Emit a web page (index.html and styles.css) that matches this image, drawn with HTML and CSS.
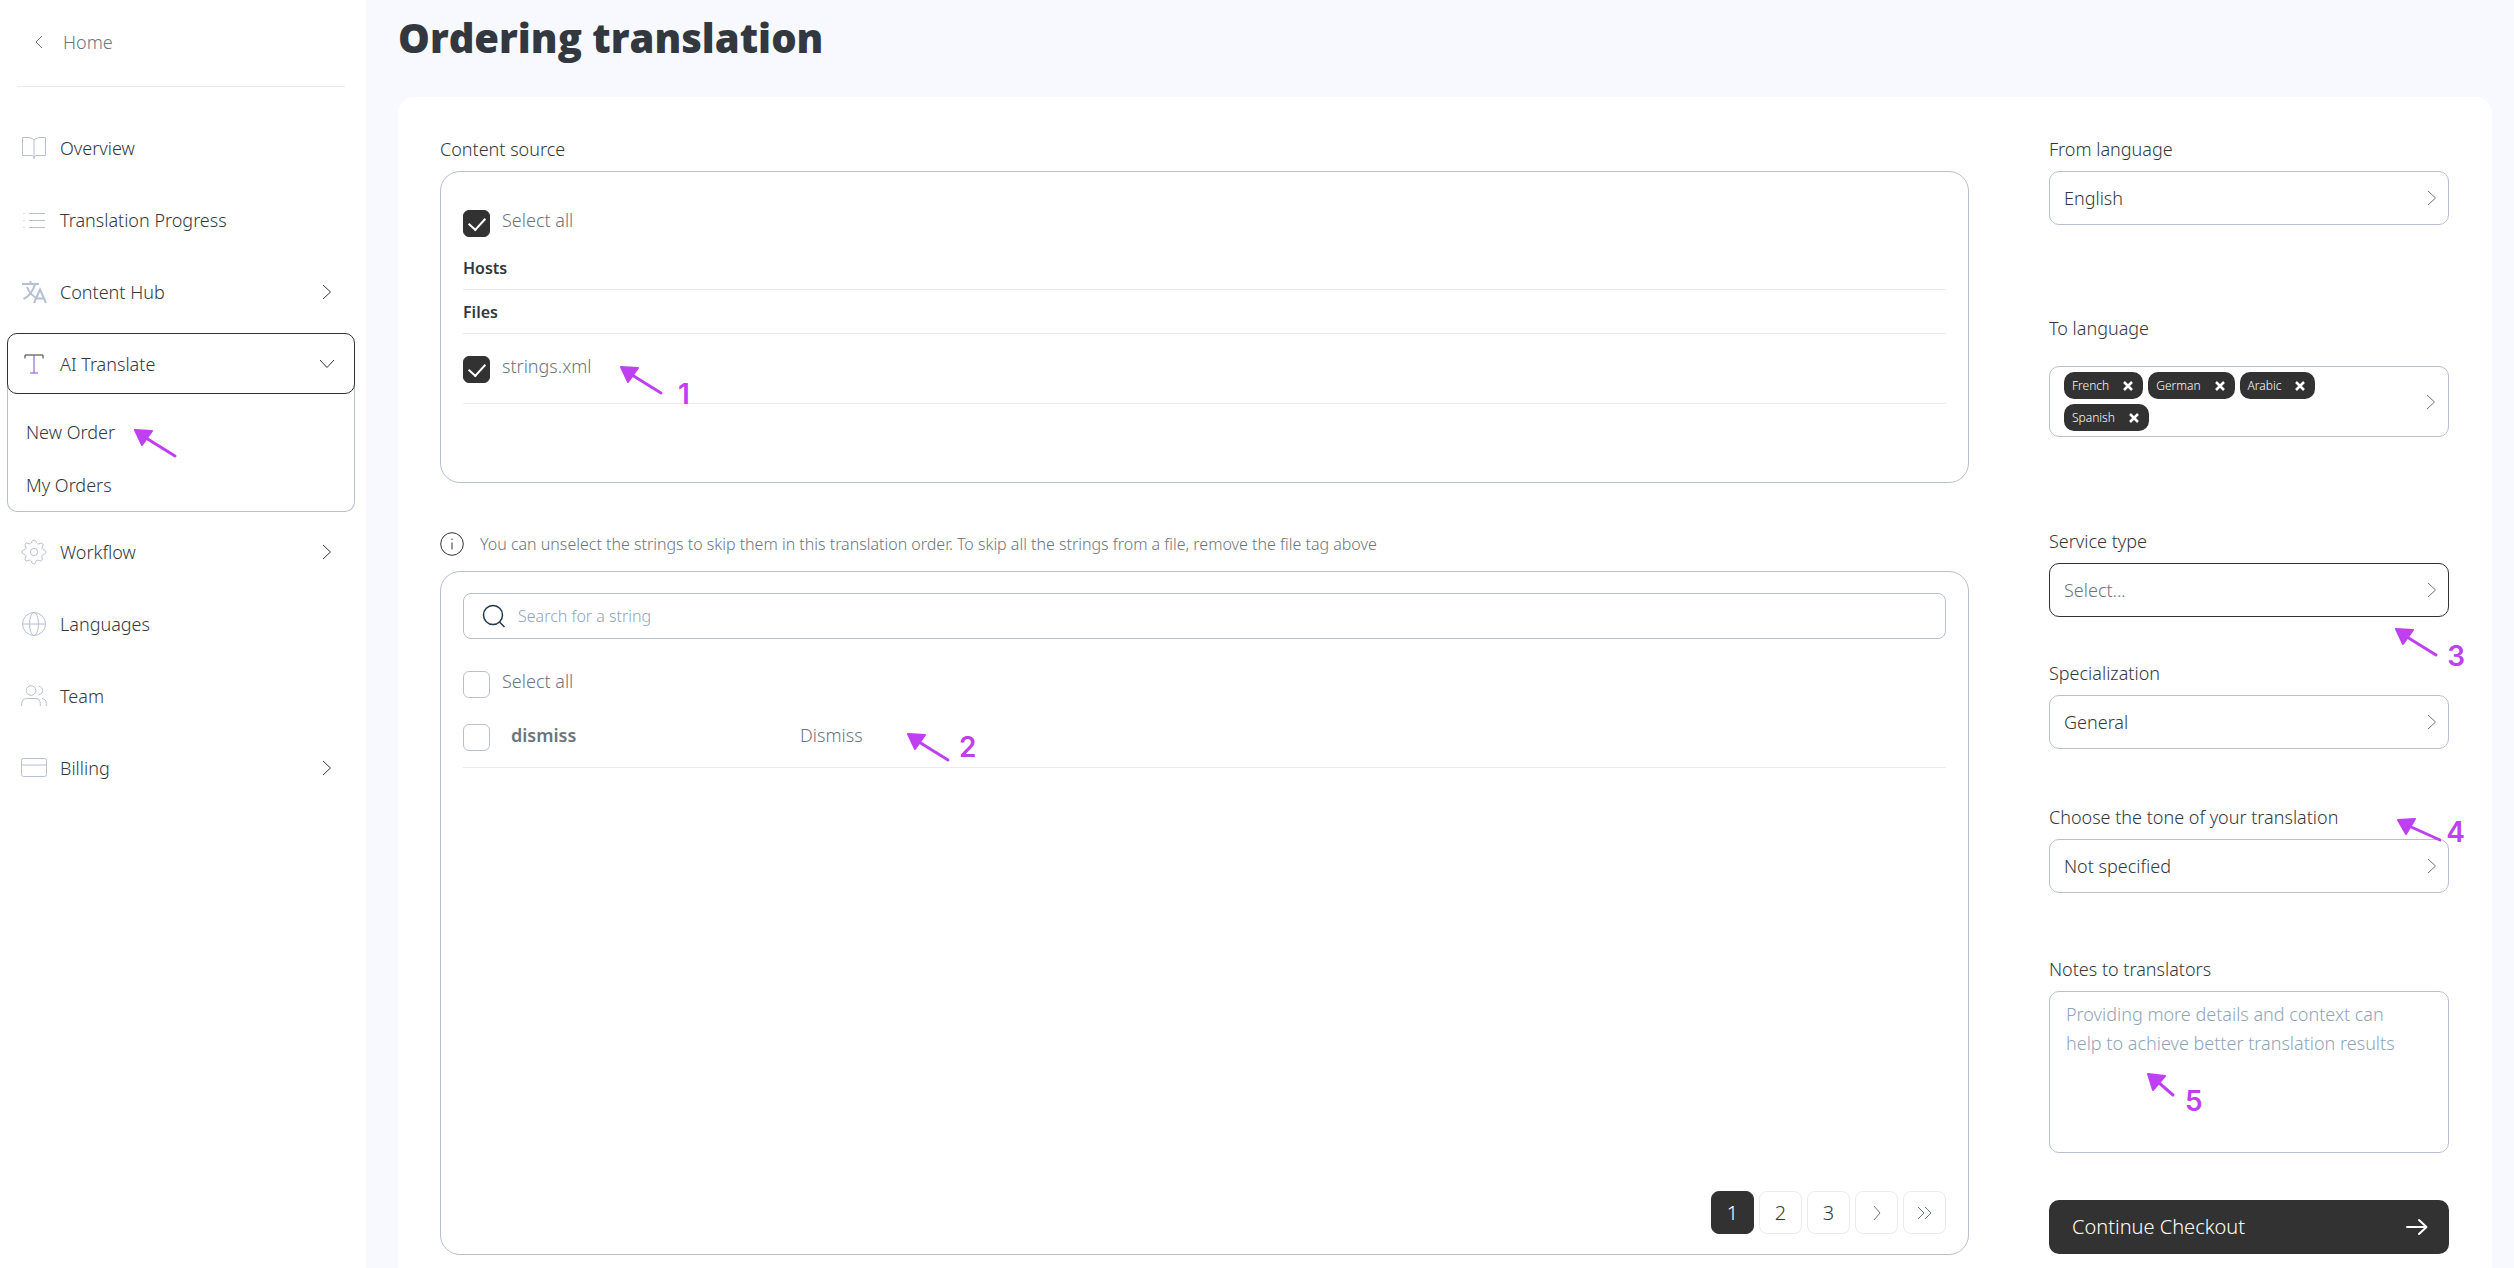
FILE: index.html
```html
<!DOCTYPE html>
<html lang="en">
<head>
<meta charset="utf-8">
<meta name="viewport" content="width=device-width, initial-scale=1">
<title>Ordering translation</title>
<link rel="stylesheet" href="styles.css">
</head>
<body>
<svg class="sprite" aria-hidden="true">
  <symbol id="chevron" viewBox="0 0 10 16"><path d="M1 1l7.500 7L1 15"/></symbol>
  <symbol id="pointer" viewBox="0 0 44 30">
    <path class="pointer-head" d="M1 1l17 1-10 14z"/>
    <path class="pointer-tail" d="M12 9l29 18"/>
  </symbol>
  <symbol id="cross" viewBox="0 0 10 10"><path d="M1 1l8 8M9 1L1 9"/></symbol>
</svg>

<div class="app">
  <nav class="sidebar" aria-label="Main">
    <a class="home" href="#">
      <svg class="home-icon" viewBox="0 0 8 14"><path d="M7 1L1 7l6 6"/></svg>
      Home
    </a>
    <ul class="menu">
      <li><a class="menu-item" href="#">
        <svg class="menu-icon" viewBox="0 0 26 26"><path d="M13 5C11 3 9 2.500 6 2.500H1.500v18H10c2 0 3 .5 3 3 0-2.500 1-3 3-3h8.500v-18H20c-3 0-5 .5-7 2.500zM13 5v18.500"/></svg>
        <span>Overview</span></a></li>
      <li><a class="menu-item" href="#">
        <svg class="menu-icon" viewBox="0 0 26 26"><path d="M2.500 6.500h1M8 6.500h16M2.500 13.500h1M8 13.500h16M2.500 20.500h1M8 20.500h16"/></svg>
        <span>Translation Progress</span></a></li>
      <li><a class="menu-item" href="#">
        <svg class="menu-icon icon-bold" viewBox="0 0 26 26"><path d="M1 5h17M9.500 2v3M14 5c-1.500 6-5.500 12-11.500 15M6 8c2 5 4.500 8 8.500 10.500M13 24l6-13.500L25 24M15 19.500h8"/></svg>
        <span>Content Hub</span>
        <svg class="menu-chevron"><use href="#chevron"/></svg></a></li>
      <li class="menu-group">
        <button class="menu-item menu-toggle" type="button" aria-expanded="true">
          <svg class="menu-icon icon-ai" viewBox="0 0 26 26"><path d="M4 7.500V4h18v3.500"/><path class="accent" d="M13 4v18M9 22h8"/></svg>
          <span>AI Translate</span>
          <svg class="menu-chevron is-open"><use href="#chevron"/></svg>
        </button>
        <ul class="submenu">
          <li><a href="#">New Order</a><svg class="pointer pointer-order"><use href="#pointer"/></svg></li>
          <li><a href="#">My Orders</a></li>
        </ul>
      </li>
      <li><a class="menu-item" href="#">
        <svg class="menu-icon" viewBox="0 0 26 26"><circle cx="13" cy="13" r="3.600"/><path d="M13 1c2.200 0 2 3.200 3.600 3.900S20 3 21.500 4.500s-.9 3.300-.4 4.900S25 10.800 25 13s-3.200 2-3.900 3.600.9 3.400-.4 4.900-3.300-.9-4.900-.4S15.200 25 13 25s-2-3.200-3.600-3.900S6 23 4.500 21.500s.9-3.300.4-4.900S1 15.200 1 13s3.200-2 3.900-3.600S3 6 4.500 4.500s3.300.9 4.900.4S10.800 1 13 1z"/></svg>
        <span>Workflow</span>
        <svg class="menu-chevron"><use href="#chevron"/></svg></a></li>
      <li><a class="menu-item" href="#">
        <svg class="menu-icon" viewBox="0 0 26 26"><circle cx="13" cy="13" r="11.500"/><ellipse cx="13" cy="13" rx="4.500" ry="11.500"/><path d="M1.500 13h23"/></svg>
        <span>Languages</span></a></li>
      <li><a class="menu-item" href="#">
        <svg class="menu-icon" viewBox="0 0 26 26"><circle cx="10" cy="7.500" r="4.800"/><path d="M.7 23v-2.500c0-3 2-5 5-5h8.600c3 0 5 2 5 5V23M17.500 3c5.500.8 5.500 8.200 0 9M21 15.500c3 .6 4.300 2.300 4.300 5V23"/></svg>
        <span>Team</span></a></li>
      <li><a class="menu-item" href="#">
        <svg class="menu-icon" viewBox="0 0 26 26"><rect x=".5" y="3.500" width="25" height="18" rx="2"/><path d="M.5 10h25"/></svg>
        <span>Billing</span>
        <svg class="menu-chevron"><use href="#chevron"/></svg></a></li>
    </ul>
  </nav>

  <main class="main">
    <h1>Ordering translation</h1>
    <form class="card">
      <div class="content">
        <h2 class="label">Content source</h2>
        <section class="panel sources">
          <label class="check"><input type="checkbox" checked><span>Select all</span></label>
          <h3>Hosts</h3>
          <h3>Files</h3>
          <div class="file-row">
            <label class="check"><input type="checkbox" checked><span>strings.xml</span></label>
            <span class="note note-file"><svg class="pointer"><use href="#pointer"/></svg><b>1</b></span>
          </div>
        </section>

        <p class="hint">
          <svg class="hint-icon" viewBox="0 0 24 24"><circle cx="12" cy="12" r="11.300"/><path d="M12 10.500v7M12 6.500v1.500"/></svg>
          You can unselect the strings to skip them in this translation order. To skip all the strings from a file, remove the file tag above
        </p>

        <section class="panel strings">
          <div class="search">
            <svg class="search-icon" viewBox="0 0 24 24"><circle cx="11" cy="11" r="9.500"/><path d="M17.500 18l5 5"/></svg>
            <input type="search" aria-label="Search for a string" placeholder="Search for a string">
          </div>
          <label class="check"><input type="checkbox"><span>Select all</span></label>
          <table class="string-table">
            <tr>
              <td class="cell-check"><input type="checkbox" aria-label="dismiss"></td>
              <th scope="row">dismiss</th>
              <td>Dismiss <span class="note note-string"><svg class="pointer"><use href="#pointer"/></svg><b>2</b></span></td>
            </tr>
          </table>
          <nav class="pages" aria-label="Pages">
            <button type="button" class="current" aria-current="page">1</button>
            <button type="button">2</button>
            <button type="button">3</button>
            <button type="button" aria-label="Next page"><svg viewBox="0 0 18 16"><path d="M6 1l6 7-6 7"/></svg></button>
            <button type="button" aria-label="Last page"><svg viewBox="0 0 18 16"><path d="M2 2l6 6-6 6M9 2l6 6-6 6"/></svg></button>
          </nav>
        </section>
      </div>

      <div class="options">
        <div class="field field-from">
          <label class="label" for="from">From language</label>
          <div class="select"><select id="from"><option>English</option></select><svg><use href="#chevron"/></svg></div>
        </div>
        <div class="field field-to">
          <span class="label">To language</span>
          <div class="tags">
            <div class="tag-list">
              <span class="tag">French<button type="button" aria-label="Remove French"><svg><use href="#cross"/></svg></button></span>
              <span class="tag">German<button type="button" aria-label="Remove German"><svg><use href="#cross"/></svg></button></span>
              <span class="tag">Arabic<button type="button" aria-label="Remove Arabic"><svg><use href="#cross"/></svg></button></span>
              <span class="tag">Spanish<button type="button" aria-label="Remove Spanish"><svg><use href="#cross"/></svg></button></span>
            </div>
            <svg class="tags-chevron"><use href="#chevron"/></svg>
          </div>
        </div>
        <div class="field field-service">
          <label class="label" for="service">Service type</label>
          <div class="select is-active"><select id="service"><option>Select...</option></select><svg><use href="#chevron"/></svg></div>
          <span class="note note-service"><svg class="pointer"><use href="#pointer"/></svg><b>3</b></span>
        </div>
        <div class="field field-special">
          <label class="label" for="special">Specialization</label>
          <div class="select"><select id="special"><option>General</option></select><svg><use href="#chevron"/></svg></div>
        </div>
        <div class="field field-tone">
          <label class="label" for="tone">Choose the tone of your translation</label>
          <div class="select"><select id="tone"><option>Not specified</option></select><svg><use href="#chevron"/></svg></div>
          <span class="note note-tone"><svg class="pointer" viewBox="0 0 44 30"><path class="pointer-head" d="M1 2l17-1-9 15z"/><path class="pointer-tail" d="M12 8l31 14"/></svg><b>4</b></span>
        </div>
        <div class="field field-notes">
          <label class="label" for="notes">Notes to translators</label>
          <textarea id="notes" placeholder="Providing more details and context can help to achieve better translation results"></textarea>
          <span class="note note-notes"><svg class="pointer" viewBox="0 0 44 30"><path class="pointer-head" d="M1 1l17 2-12 14z"/><path class="pointer-tail" d="M11 9l15 13"/></svg><b>5</b></span>
        </div>
        <button class="checkout" type="submit">Continue Checkout
          <svg viewBox="0 0 22 18"><path d="M1 9h19M13 2l7.500 7-7.500 7"/></svg>
        </button>
      </div>
    </form>
  </main>
</div>
</body>
</html>
```
FILE: styles.css
```css
:root {
  --ink: #32383e;
  --dark: #323232;
  --muted: #6c757d;
  --line: #b6c0d0;
  --rule: #e9ebed;
  --mark: #bf40f0;
}

* { box-sizing: border-box; }

body {
  margin: 0;
  background: #f8f9fe;
  color: var(--ink);
  font: 300 18px/24px "Noto Sans", "Open Sans", sans-serif;
}

button, input, select, textarea { font: inherit; color: inherit; }
button { cursor: pointer; }
ul { margin: 0; padding: 0; list-style: none; }
a { color: inherit; text-decoration: none; }
svg { fill: none; stroke: currentColor; }
.sprite { position: absolute; width: 0; height: 0; }

.app { display: flex; min-height: 100vh; }

/* Sidebar */
.sidebar { flex: 0 0 366px; background: #fff; }
.home {
  display: flex;
  align-items: center;
  gap: 20px;
  height: 87px;
  margin: 0 21px 25px 17px;
  padding: 0 18px 2px;
  border-bottom: 1px solid var(--rule);
  color: var(--muted);
}
.home-icon { width: 8px; height: 14px; }
.menu-item {
  display: flex;
  align-items: center;
  gap: 13px;
  width: 100%;
  height: 72px;
  padding: 0 34px 0 21px;
  text-align: left;
}
.menu-item span { flex: 1; }
.menu-icon { width: 26px; height: 26px; color: var(--line); }
.icon-bold { stroke-width: 2; }
.icon-ai { color: var(--dark); }
.accent { stroke: #7c4dd8; }
.menu-chevron { width: 10px; height: 16px; }
.menu-group { margin: 5px 11px 4px 7px; }
.menu-toggle {
  position: relative;
  height: 61px;
  padding: 0 22px 0 13px;
  border: 1px solid var(--dark);
  border-radius: 10px;
  background: #fff;
}
.is-open { transform: rotate(90deg); }
.submenu {
  display: grid;
  gap: 13px;
  margin-top: -10px;
  padding: 28px 18px 6px;
  border: 1px solid var(--line);
  border-top: 0;
  border-radius: 0 0 10px 10px;
}
.submenu li { position: relative; line-height: 40px; }

/* Hand-drawn callouts lying over the page */
.pointer { width: 44px; height: 30px; color: var(--mark); stroke-width: 3; stroke-linecap: round; stroke-linejoin: round; }
.pointer-head { fill: var(--mark); stroke-width: 2; }
.pointer-order { position: absolute; left: 108px; top: 17px; }
.note { position: absolute; display: flex; align-items: flex-start; gap: 8px; color: var(--mark); font: 600 28px/28px Inter, sans-serif; pointer-events: none; }
.note b { font-weight: 600; }

/* Main column */
.main { flex: 1; min-width: 0; padding: 0 22px 0 32px; }
h1 { margin: 0; padding: 10px 0 31px; font-family: "Open Sans", "Noto Sans", sans-serif; font-size: 40px; line-height: 56px; font-weight: 800; }
.card {
  display: grid;
  grid-template-columns: minmax(0, 1fr) 400px;
  gap: 80px;
  min-height: calc(100vh - 97px);
  padding: 40px 43px 14px 42px;
  border-radius: 16px 16px 0 0;
  background: #fff;
}
.content { display: flex; flex-direction: column; }
.label { display: block; margin: 0 0 10px; font-size: 18px; line-height: 24px; font-weight: inherit; }
.panel { border: 1px solid var(--line); border-radius: 20px; padding: 0 22px; }
.sources { height: 312px; padding-top: 34px; }
.check { display: flex; gap: 12px; color: var(--muted); line-height: 28px; }

input[type="checkbox"] {
  flex: none;
  appearance: none;
  display: block;
  width: 27px;
  height: 27px;
  margin: 4px 0 0;
  border: 1px solid var(--line);
  border-radius: 6px;
  background: #fff;
}
input[type="checkbox"]:checked { border-color: var(--dark); background: var(--dark); }
input[type="checkbox"]:checked::before {
  content: "";
  display: block;
  width: 8px;
  height: 14px;
  margin: 3px auto 0;
  border: solid #fff;
  border-width: 0 2px 2px 0;
  transform: rotate(42deg);
}
.sources h3 { margin: 0; height: 44px; padding-top: 10px; border-bottom: 1px solid var(--rule); font-size: 16px; line-height: 24px; font-weight: 600; }
.sources h3:first-of-type { margin-top: 9px; }
.file-row { position: relative; padding: 18px 0 20px; border-bottom: 1px solid var(--rule); }
.note-file { left: 157px; top: 32px; gap: 14px; }
.note-file b, .note-service b, .note-notes b { padding-top: 14px; }

.hint { display: flex; align-items: center; gap: 16px; margin: 48px 0 14px; color: var(--muted); font-size: 16px; line-height: 26px; }
.hint-icon { width: 24px; height: 24px; color: var(--dark); }

.strings { display: flex; flex-direction: column; min-height: 684px; padding-top: 21px; padding-bottom: 20px; }
.search { display: flex; align-items: center; gap: 12px; height: 46px; margin-bottom: 28px; padding: 0 18px; border: 1px solid var(--line); border-radius: 8px; }
.search-icon { width: 24px; height: 24px; color: #23384a; stroke-width: 1.5; }
.search input { flex: 1; padding: 0; border: 0; outline: 0; background: none; font-size: 16px; }
::placeholder { color: #8fa5b8; opacity: 1; }
.string-table { width: 100%; margin-top: 17px; border-collapse: collapse; border-bottom: 1px solid var(--rule); color: var(--muted); text-align: left; }
.string-table td, .string-table th { height: 52px; padding: 0 0 12px; vertical-align: middle; }
.string-table .cell-check { width: 48px; padding-bottom: 10px; }
.string-table th { width: 289px; font-weight: 600; }
.string-table td:last-child { position: relative; }
.note-string { left: 107px; top: 18px; }

.pages { display: flex; justify-content: flex-end; gap: 5px; margin-top: auto; }
.pages button { display: grid; place-items: center; width: 43px; height: 43px; padding: 0; border: 1px solid var(--rule); border-radius: 8px; background: #fff; font-size: 20px; }
.pages .current { border-color: var(--dark); background: var(--dark); color: #fff; }
.pages svg { width: 18px; height: 16px; color: var(--muted); }

/* Order options */
.field { position: relative; }
.field-from { margin-bottom: 91px; }
.field-to { margin-bottom: 92px; }
.field-service { margin-bottom: 44px; }
.field-special { margin-bottom: 56px; }
.field-tone { margin-bottom: 64px; }
.field-notes { margin-bottom: 47px; }
.select { display: grid; align-items: center; }
.select select { grid-area: 1 / 1; width: 100%; height: 54px; padding: 0 14px; border: 1px solid var(--line); border-radius: 10px; appearance: none; background: #fff; }
.select svg { grid-area: 1 / 1; justify-self: end; width: 10px; height: 16px; margin-right: 12px; color: var(--muted); pointer-events: none; }
.select.is-active select { border-color: var(--dark); color: var(--muted); }
.field-to .label { margin-bottom: 26px; }
.tags { display: flex; align-items: center; justify-content: space-between; padding: 5px 12px 5px 14px; border: 1px solid var(--line); border-radius: 10px; }
.tag-list { display: flex; flex-wrap: wrap; gap: 5px; max-width: 300px; }
.tag { display: flex; align-items: center; gap: 14px; height: 27px; padding: 0 10px 0 8px; border-radius: 10px; background: var(--dark); color: #fff; font-size: 12px; }
.tag button { display: grid; padding: 0; border: 0; background: none; }
.tag svg { width: 10px; height: 10px; stroke-width: 2.500; }
.tags-chevron { width: 10px; height: 16px; color: var(--muted); }
textarea { display: block; width: 100%; height: 162px; padding: 8px 28px 8px 16px; border: 1px solid var(--line); border-radius: 10px; resize: none; line-height: 29px; background: #fff; }
.note-service { right: -16px; bottom: -53px; }
.note-tone { right: -16px; bottom: 45px; gap: 5px; }
.note-notes { left: 98px; top: 116px; }
.note-notes .pointer { margin-right: -14px; }
.checkout { display: flex; align-items: center; justify-content: space-between; width: 100%; height: 54px; padding: 0 21px 0 23px; border: 0; border-radius: 10px; background: var(--dark); color: #fff; font-size: 20px; }
.checkout svg { width: 22px; height: 18px; stroke-width: 2; stroke-linecap: round; stroke-linejoin: round; }
```
